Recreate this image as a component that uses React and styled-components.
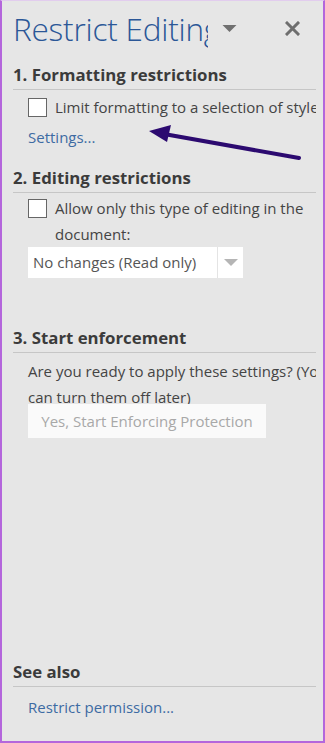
import React from 'react';
import styled, { createGlobalStyle } from 'styled-components';

const GlobalStyle = createGlobalStyle`
  html, body {
    margin: 0;
    padding: 0;
    background: #e6e6e6;
  }
  * {
    box-sizing: border-box;
  }
`;

const Pane = styled.div`
  position: relative;
  width: 325px;
  height: 743px;
  display: flex;
  flex-direction: column;
  background: #e6e6e6;
  border: 2px solid #b466dc;
  border-top: 1px solid #e2cdee;
  padding: 0 7px 0 11px;
  font-family: 'Open Sans', 'Noto Sans', sans-serif;
  color: #444444;
  overflow: hidden;
`;

const Header = styled.div`
  display: flex;
  align-items: center;
  height: 52px;
  padding-top: 2px;
`;

const Title = styled.h1`
  margin: 0;
  width: 195px;
  overflow: hidden;
  white-space: nowrap;
  font-size: 31.5px;
  font-weight: 300;
  color: #2b5797;
  letter-spacing: -0.2px;
`;

const HeaderIcon = styled.span`
  display: flex;
  align-items: center;
  justify-content: center;
  margin-left: ${props => props.gap}px;
`;

const Section = styled.section`
  display: flex;
  flex-direction: column;
  margin-top: ${props => props.top || 0}px;
`;

const Heading = styled.h2`
  margin: 0;
  padding: 0 0 3px 0;
  font-size: 16.8px;
  font-weight: 700;
  color: #3b3b3b;
  border-bottom: 1px solid #c6c6c6;
  line-height: 22px;
`;

const Body = styled.div`
  display: flex;
  flex-direction: column;
  padding-left: 15px;
  overflow: hidden;
`;

const CheckRow = styled.label`
  display: flex;
  align-items: flex-start;
  gap: 8px;
  margin-top: ${props => props.top}px;
  font-size: 15px;
  line-height: 26px;
  color: #444444;
  white-space: ${props => (props.wrap ? 'normal' : 'nowrap')};
`;

const Box = styled.span`
  flex: none;
  width: 19px;
  height: 19px;
  margin-top: 4px;
  background: #ffffff;
  border: 1px solid #666666;
`;

const Text = styled.p`
  margin: ${props => props.top || 0}px 0 0;
  font-size: 15px;
  line-height: 26px;
  color: #444444;
  white-space: nowrap;
`;

const Link = styled.a`
  margin-top: ${props => props.top}px;
  font-size: 15px;
  line-height: 20px;
  color: #3d6ba3;
  text-decoration: none;
`;

const Select = styled.div`
  display: flex;
  width: 215px;
  height: 31px;
  background: #ffffff;
`;

const SelectValue = styled.span`
  flex: 1;
  padding-left: 5px;
  font-size: 15px;
  line-height: 31px;
  color: #555555;
  border-right: 1px solid #e4e4e4;
`;

const SelectArrow = styled.span`
  display: flex;
  align-items: center;
  justify-content: center;
  width: 25px;
`;

const Button = styled.div`
  width: 238px;
  height: 34px;
  margin-top: -6px;
  background: #fafafa;
  font-size: 15px;
  line-height: 34px;
  text-align: center;
  color: #a8a8a8;
`;

const Spacer = styled.div`
  flex: 1;
`;

const Footer = styled.div`
  height: 24px;
`;

const Annotation = styled.svg`
  position: absolute;
  left: 0;
  top: 0;
  pointer-events: none;
`;

const Triangle = ({ color, w, h }) => (
  <svg width={w} height={h} viewBox="0 0 14 7">
    <path d="M0 0 L14 0 L7 7 Z" fill={color} />
  </svg>
);

export default function App() {
  return (
    <>
      <GlobalStyle />
      <Pane>
        <Header>
          <Title>Restrict Editing</Title>
          <HeaderIcon gap={14}>
            <Triangle color="#707070" w={15} h={7} />
          </HeaderIcon>
          <HeaderIcon gap={48}>
            <svg width="15" height="15" viewBox="0 0 15 15">
              <path d="M2 2 L13 13 M13 2 L2 13" stroke="#6e6e6e" strokeWidth="3" strokeLinecap="square" />
            </svg>
          </HeaderIcon>
        </Header>

        <Section top={11}>
          <Heading>1. Formatting restrictions</Heading>
          <Body>
            <CheckRow top={4}>
              <Box />
              <span>Limit formatting to a selection of styles</span>
            </CheckRow>
            <Link href="#" top={7}>Settings...</Link>
          </Body>
        </Section>

        <Section top={20}>
          <Heading>2. Editing restrictions</Heading>
          <Body>
            <CheckRow top={2} wrap>
              <Box />
              <span>Allow only this type of editing in the document:</span>
            </CheckRow>
            <Select>
              <SelectValue>No changes (Read only)</SelectValue>
              <SelectArrow>
                <Triangle color="#b5b5b5" w={14} h={7} />
              </SelectArrow>
            </Select>
          </Body>
        </Section>

        <Section top={49}>
          <Heading>3. Start enforcement</Heading>
          <Body>
            <Text top={5}>Are you ready to apply these settings? (You</Text>
            <Text>can turn them off later)</Text>
            <Button>Yes, Start Enforcing Protection</Button>
          </Body>
        </Section>

        <Spacer />

        <Section>
          <Heading>See also</Heading>
          <Body>
            <Link href="#" top={10}>Restrict permission...</Link>
          </Body>
        </Section>
        <Footer />

        <Annotation width="325" height="743" viewBox="0 0 325 743">
          <line x1="297" y1="157" x2="162" y2="133" stroke="#2c0a70" strokeWidth="4" strokeLinecap="round" />
          <path d="M147 130 L169 124 L165 141 Z" fill="#2c0a70" />
        </Annotation>
      </Pane>
    </>
  );
}
